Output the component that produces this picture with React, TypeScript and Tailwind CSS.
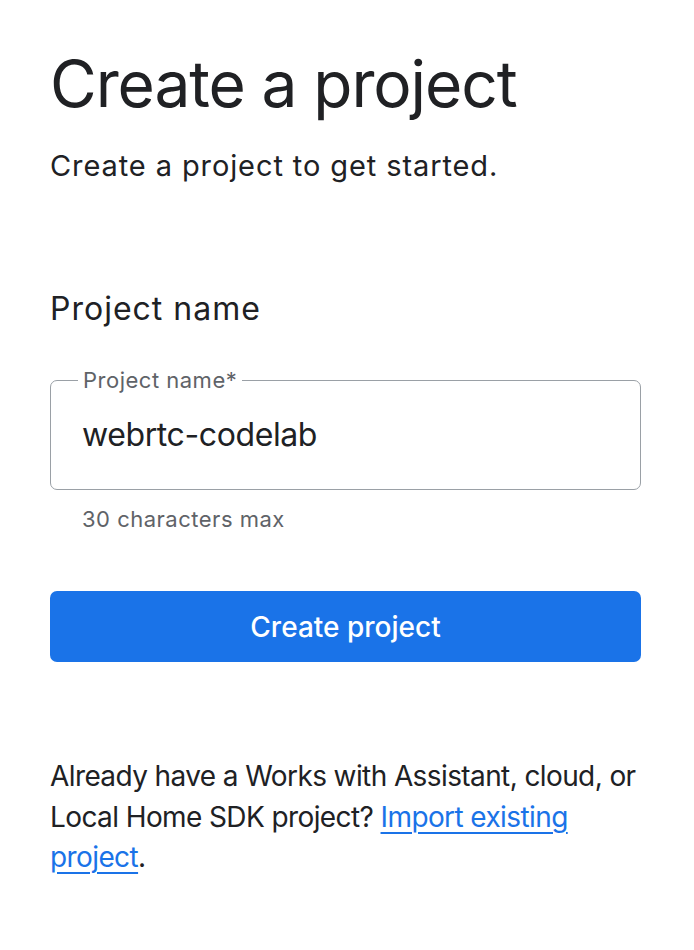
export default function App() {
  return (
    <main className="min-h-screen bg-white font-['Inter','Roboto',sans-serif] text-[#202124]">
      <div className="pl-[50px] pr-[53px] pt-[46px]">
        <h1 className="text-[64px] leading-[76px] font-normal tracking-[-1.1px]">Create a project</h1>
        <p className="mt-[26px] text-[29px] leading-[36px] tracking-[0.9px]">Create a project to get started.</p>

        <h2 className="mt-[105px] text-[32px] leading-[40px] font-normal tracking-[1px]">Project name</h2>

        <div className="relative mt-[51px] h-[110px] rounded-[7px] border border-[#9aa0a6]">
          <span className="absolute -top-[15px] left-[27px] bg-white px-[5px] text-[22px] leading-[28px] tracking-[0.5px] text-[#5f6368]">
            Project name*
          </span>
          <div className="flex h-full items-center pl-[31px] text-[32px] leading-[40px] tracking-[-0.4px]">
            webrtc-codelab
          </div>
        </div>
        <p className="mt-[15px] pl-[32px] text-[22px] leading-[28px] tracking-[0.5px] text-[#5f6368]">30 characters max</p>

        <button className="mt-[58px] flex h-[71px] w-full items-center justify-center rounded-[7px] bg-[#1a73e8] text-[28px] font-medium text-white">
          Create project
        </button>

        <p className="mt-[94px] text-[28px] leading-[40.5px] tracking-[-0.6px]">
          Already have a Works with Assistant, cloud, or Local Home SDK project?{' '}
          <a href="#" className="text-[#1a73e8] underline underline-offset-[5px] decoration-[2px]">
            Import existing project
          </a>
          .
        </p>
      </div>
    </main>
  );
}
